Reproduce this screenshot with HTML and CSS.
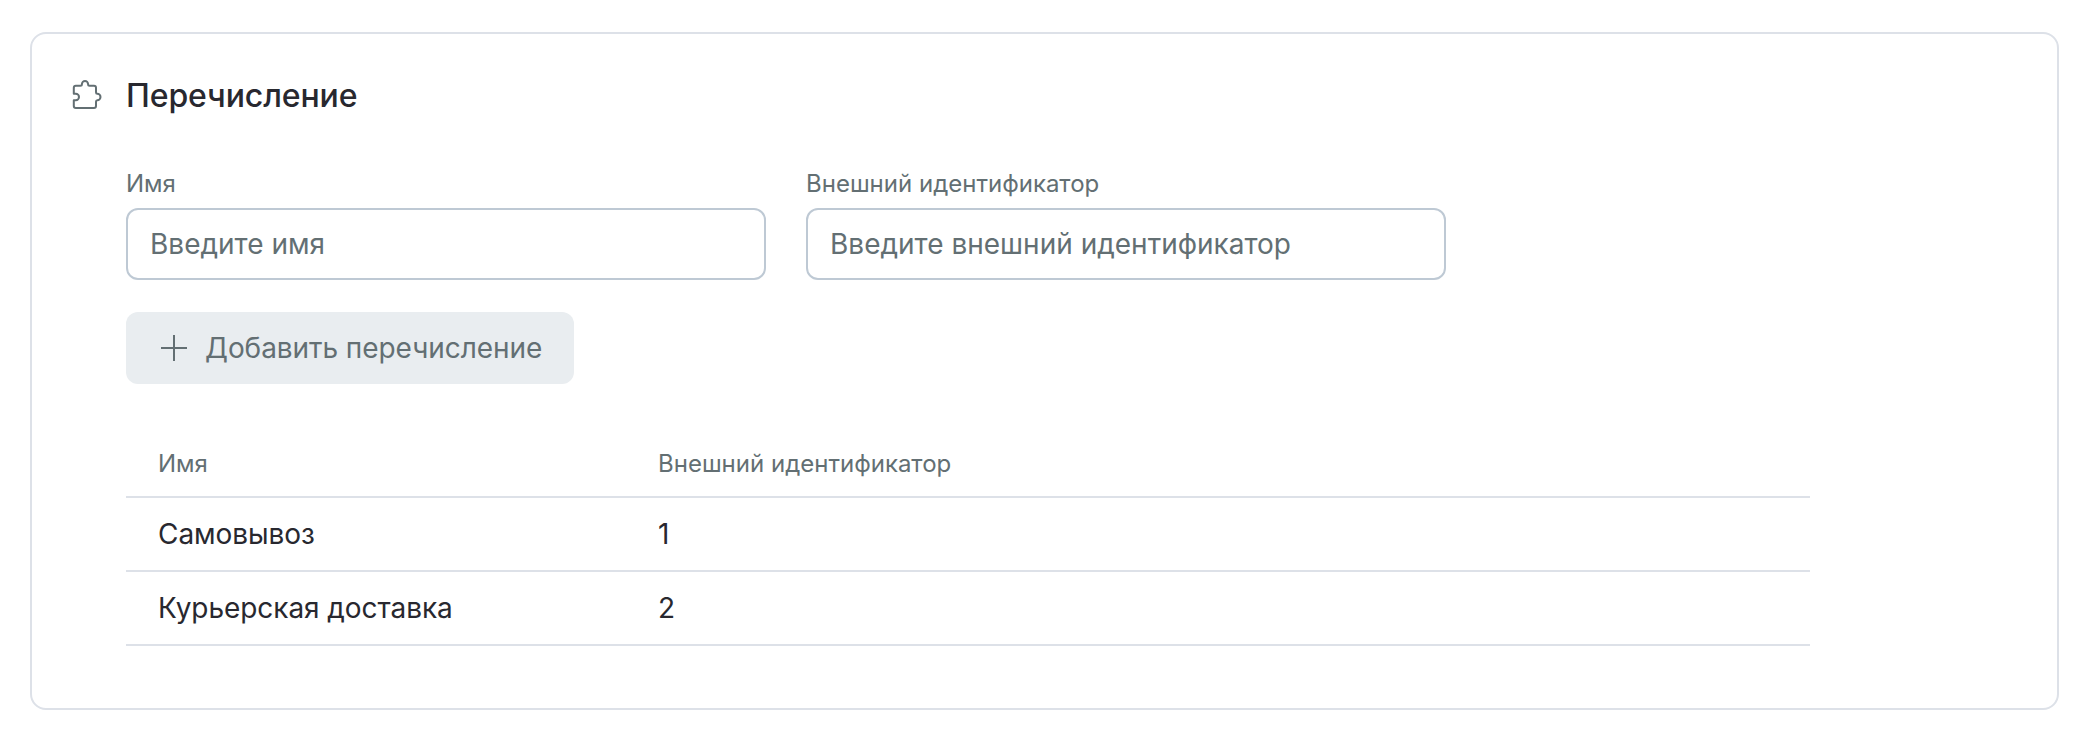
FILE: index.html
```html
<!DOCTYPE html>
<html lang="ru">
<head>
<meta charset="utf-8">
<title>Перечисление</title>
<link rel="stylesheet" href="styles.css">
</head>
<body>
<section class="card">
  <header class="card-header">
    <svg class="card-icon" width="32" height="32" viewBox="0 0 32 32" fill="none" stroke="currentColor" stroke-width="2" stroke-linejoin="round">
      <path d="M4.800 7.800H9.400Q10.900 7.800 10.900 6.300A3.100 3.300 0 0 1 17.100 6.300Q17.100 7.800 18.600 7.800H23Q25 7.800 25 9.800V14.300Q25 15.800 26.300 15.800A3.200 3.200 0 0 1 26.300 22.200Q25 22.200 25 23.700V28Q25 30 23 30H4.800Q2.800 30 2.800 28V22.200H4.800A3.200 3.200 0 0 0 4.800 15.800H2.800V9.800Q2.800 7.800 4.800 7.800Z"/>
    </svg>
    <h1 class="card-title">Перечисление</h1>
  </header>
  <div class="card-body">
    <div class="fields">
      <label class="field">
        <span class="field-label">Имя</span>
        <input class="field-input" type="text" placeholder="Введите имя">
      </label>
      <label class="field">
        <span class="field-label">Внешний идентификатор</span>
        <input class="field-input" type="text" placeholder="Введите внешний идентификатор">
      </label>
    </div>
    <button class="add-button" type="button">
      <svg class="add-icon" width="26" height="26" viewBox="0 0 26 26" stroke="currentColor" stroke-width="2">
        <path d="M13 0V26M0 13H26"/>
      </svg>
      <span>Добавить перечисление</span>
    </button>
    <table class="table">
      <thead>
        <tr><th class="col-name">Имя</th><th>Внешний идентификатор</th></tr>
      </thead>
      <tbody>
        <tr><td>Самовывоз</td><td>1</td></tr>
        <tr><td>Курьерская доставка</td><td>2</td></tr>
      </tbody>
    </table>
  </div>
</section>
</body>
</html>
```
FILE: styles.css
```css
* {
  box-sizing: border-box;
}

body {
  margin: 0;
  padding: 32px 31px 20px 30px;
  background: #fff;
  color: #28282f;
  font-family: Inter, "Liberation Sans", sans-serif;
  font-size: 28px;
}

.card {
  height: 678px;
  padding: 38px 39px;
  border: 2px solid #dde1e8;
  border-radius: 16px;
}

.card-header {
  display: flex;
  align-items: center;
  gap: 23px;
  height: 48px;
  margin-bottom: 48px;
}

.card-icon {
  flex: none;
  margin-bottom: 4px;
  color: #636f73;
}

.card-title {
  margin: 0;
  font-size: 32px;
  font-weight: 500;
  line-height: 48px;
  letter-spacing: -0.12px;
}

.card-body {
  padding-left: 55px;
}

.fields {
  display: flex;
  gap: 40px;
}

.field {
  display: flex;
  flex-direction: column;
  gap: 8px;
  width: 640px;
}

.field-label {
  color: #636f73;
  font-size: 24px;
  line-height: 32px;
}

.field-input {
  width: 100%;
  height: 72px;
  padding: 0 22px;
  border: 2px solid #bec9d4;
  border-radius: 12px;
  background: #fff;
  font: inherit;
}

.field-input::placeholder {
  color: #636f73;
  opacity: 1;
}

.add-button {
  display: flex;
  align-items: center;
  width: 448px;
  height: 72px;
  margin-top: 32px;
  padding: 0 0 0 35px;
  gap: 18px;
  border: 0;
  border-radius: 12px;
  background: #e9edf0;
  color: #636f73;
  font: inherit;
  letter-spacing: -0.06px;
  white-space: nowrap;
}

.add-icon {
  flex: none;
}

.table {
  width: 1684px;
  margin-top: 46px;
  border-collapse: separate;
  border-spacing: 0;
  table-layout: fixed;
}

.col-name {
  width: 500px;
}

.table th,
.table td {
  padding: 0 32px;
  border-bottom: 2px solid #dde1e8;
  text-align: left;
  font-weight: 400;
}

.table th {
  height: 68px;
  color: #636f73;
  font-size: 24px;
}

.table td {
  height: 74px;
  letter-spacing: -0.06px;
}
```
